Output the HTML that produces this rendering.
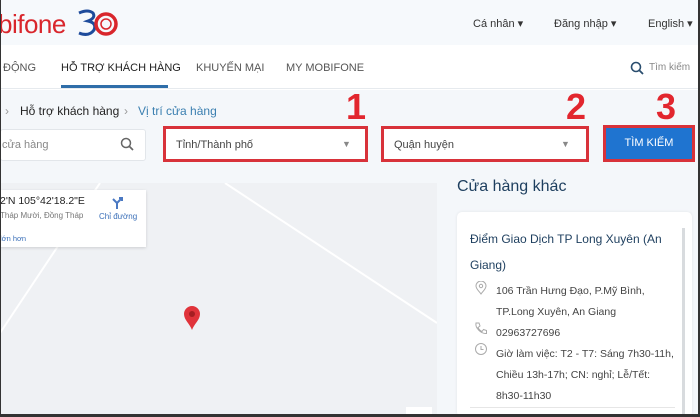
<!DOCTYPE html>
<html><head><meta charset="utf-8"><style>
*{margin:0;padding:0;box-sizing:border-box}
body{width:700px;height:417px;overflow:hidden;background:#fff;font-family:"Liberation Sans",sans-serif;position:relative}
.a{position:absolute;white-space:nowrap}
</style></head><body>
<div class="a" style="left:0;top:0;width:700px;height:45px;background:#f6f9fc"></div>
<div class="a" style="left:-2px;top:9px;font-size:26px;color:#d9262c;letter-spacing:-0.5px">bifone</div>
<svg class="a" style="left:76px;top:8px" width="44" height="30" viewBox="0 0 44 30"><path d="M3 5 Q12 1 17 5 Q20 10 12 13 Q21 15 18 22 Q13 29 3 25" fill="none" stroke="#1e4b9b" stroke-width="3"/><circle cx="30" cy="16" r="10" fill="none" stroke="#d9262c" stroke-width="3.5"/><circle cx="30" cy="16" r="5" fill="none" stroke="#d9262c" stroke-width="1.5"/></svg>
<div class="a" style="left:473px;top:17px;font-size:11px;color:#333">Cá nhân ▾</div>
<div class="a" style="left:554px;top:17px;font-size:11px;color:#333">Đăng nhập ▾</div>
<div class="a" style="left:648px;top:17px;font-size:11px;color:#333">English ▾</div>
<div class="a" style="left:0;top:45px;width:700px;height:44px;background:#fff;border-bottom:1px solid #e6eaee"></div>
<div class="a" style="left:3px;top:62px;font-size:11px;color:#555">ĐỘNG</div>
<div class="a" style="left:61px;top:62px;font-size:11px;color:#222">HỖ TRỢ KHÁCH HÀNG</div>
<div class="a" style="left:61px;top:85px;width:107px;height:3px;background:#2f6ea9"></div>
<div class="a" style="left:196px;top:62px;font-size:11px;color:#555">KHUYẾN MẠI</div>
<div class="a" style="left:286px;top:62px;font-size:11px;color:#555">MY MOBIFONE</div>
<svg class="a" style="left:630px;top:61px" width="14" height="14"><circle cx="6" cy="6" r="4.5" fill="none" stroke="#2a4d6e" stroke-width="1.6"/><path d="M9.5 9.5L13 13" stroke="#2a4d6e" stroke-width="1.8"/></svg>
<div class="a" style="left:649px;top:62px;font-size:10px;color:#888">Tìm kiếm</div>
<div class="a" style="left:0;top:90px;width:700px;height:327px;background:#f4f7fa"></div>
<div class="a" style="left:5px;top:104px;font-size:12px;color:#999">›</div>
<div class="a" style="left:20px;top:104px;font-size:12px;color:#222">Hỗ trợ khách hàng</div>
<div class="a" style="left:124px;top:104px;font-size:12px;color:#999">›</div>
<div class="a" style="left:138px;top:104px;font-size:12px;color:#3a7fb0">Vị trí cửa hàng</div>
<div class="a" style="left:0;top:129px;width:146px;height:32px;background:#fff;border:1px solid #e2e6ea;border-radius:3px"></div>
<div class="a" style="left:2px;top:139px;font-size:11px;color:#888">cửa hàng</div>
<svg class="a" style="left:120px;top:137px" width="14" height="14"><circle cx="6" cy="6" r="4.5" fill="none" stroke="#666" stroke-width="1.5"/><path d="M9.5 9.5L13 13" stroke="#666" stroke-width="1.7"/></svg>
<div class="a" style="left:163px;top:126px;width:205px;height:36px;background:#fff;border:3px solid #d8323a"></div>
<div class="a" style="left:176px;top:139px;font-size:11px;color:#444">Tỉnh/Thành phố</div>
<div class="a" style="left:342px;top:139px;font-size:9px;color:#888">▼</div>
<div class="a" style="left:381px;top:126px;width:208px;height:36px;background:#fff;border:3px solid #d8323a"></div>
<div class="a" style="left:394px;top:139px;font-size:11px;color:#444">Quận huyện</div>
<div class="a" style="left:561px;top:139px;font-size:9px;color:#888">▼</div>
<div class="a" style="left:603px;top:125px;width:92px;height:37px;background:#1f74d0;border:3px solid #d8323a;color:#fff;font-size:11px;text-align:center;line-height:31px">TÌM KIẾM</div>
<div class="a" style="left:346px;top:86px;font-size:36px;font-weight:bold;color:#e2262e">1</div>
<div class="a" style="left:566px;top:86px;font-size:36px;font-weight:bold;color:#e2262e">2</div>
<div class="a" style="left:656px;top:86px;font-size:36px;font-weight:bold;color:#e2262e">3</div>
<div class="a" style="left:0;top:183px;width:437px;height:231px;background:#eff1f4;overflow:hidden">
<svg width="437" height="231" style="position:absolute;left:0;top:0"><path d="M100 0 L0 150" stroke="#fff" stroke-width="2"/><path d="M225 0 L437 140" stroke="#fff" stroke-width="2"/></svg>
<div style="position:absolute;left:0;top:7px;width:146px;height:57px;background:#fff;box-shadow:0 1px 3px rgba(0,0,0,.15)"></div>
<div style="position:absolute;left:0;top:12px;font-size:10.5px;color:#222">2'N 105°42'18.2"E</div>
<div style="position:absolute;left:0;top:28px;font-size:8px;color:#777">Tháp Mười, Đồng Tháp</div>
<div style="position:absolute;left:0;top:51px;font-size:7.5px;color:#3a6fb8">lớn hơn</div>
<div style="position:absolute;left:99px;top:29px;font-size:8px;color:#3a6fb8">Chỉ đường</div>
<svg style="position:absolute;left:110px;top:13px" width="14" height="14"><path d="M7 13V7L3 3M7 7L11 3M9 2h3v3" fill="none" stroke="#4a78c2" stroke-width="2"/></svg>
<svg style="position:absolute;left:183px;top:122px" width="18" height="26"><path d="M9 25 C7 19 1 15 1 9 A8 8 0 0 1 17 9 C17 15 11 19 9 25Z" fill="#e0333a"/><circle cx="9" cy="9" r="3" fill="#a51e22"/></svg>
<div style="position:absolute;left:406px;top:224px;width:26px;height:10px;background:#fff"></div>
</div>
<div class="a" style="left:437px;top:183px;width:8px;height:231px;background:#f4f7fa"></div>
<div class="a" style="left:457px;top:178px;font-size:16px;color:#1d3e5e">Cửa hàng khác</div>
<div class="a" style="left:457px;top:212px;width:235px;height:205px;background:#fff;border-radius:5px;box-shadow:0 0 3px rgba(0,0,0,.08)"></div>
<div class="a" style="left:682px;top:228px;width:3px;height:186px;background:#d8dbde"></div>
<div class="a" style="left:470px;top:232px;font-size:12px;color:#1d3e5e">Điểm Giao Dịch TP Long Xuyên (An</div>
<div class="a" style="left:470px;top:258px;font-size:12px;color:#1d3e5e">Giang)</div>
<div class="a" style="left:496px;top:281px;font-size:10.5px;color:#444;line-height:21px">106 Trần Hưng Đạo, P.Mỹ Bình,<br>TP.Long Xuyên, An Giang<br>02963727696<br>Giờ làm việc: T2 - T7: Sáng 7h30-11h,<br>Chiều 13h-17h; CN: nghỉ; Lễ/Tết:<br>8h30-11h30</div>
<svg class="a" style="left:475px;top:281px" width="12" height="14"><path d="M6 13C4 10 1 8 1 5A5 5 0 0 1 11 5C11 8 8 10 6 13Z" fill="none" stroke="#aaa"/><circle cx="6" cy="5" r="1.7" fill="none" stroke="#aaa"/></svg>
<svg class="a" style="left:474px;top:321px" width="14" height="14"><path d="M2 2l3 0 1 3-2 1.5a8 8 0 0 0 4 4L9.5 8.5l3 1v3C7 13 1 7 2 2Z" fill="none" stroke="#aaa"/></svg>
<svg class="a" style="left:474px;top:342px" width="14" height="14"><circle cx="7" cy="7" r="5.5" fill="none" stroke="#aaa"/><path d="M7 4v3.5h2.5" fill="none" stroke="#aaa"/></svg>
<div class="a" style="left:470px;top:407px;width:205px;height:1px;background:#e6e6e6"></div>
<div class="a" style="left:0;top:0;width:1px;height:417px;background:#333"></div>
<div class="a" style="left:698px;top:0;width:2px;height:417px;background:#333"></div>
<div class="a" style="left:0;top:414px;width:700px;height:3px;background:#333"></div>
</body></html>
